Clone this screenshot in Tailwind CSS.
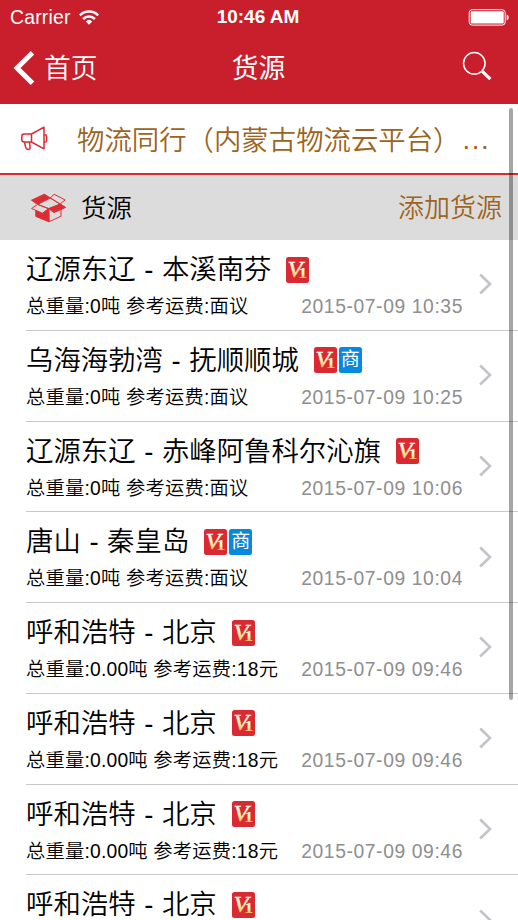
<!DOCTYPE html>
<html lang="zh-CN">
<head>
<meta charset="utf-8">
<title>货源</title>
<script src="https://cdn.jsdelivr.net/npm/@tailwindcss/browser@4"></script>
</head>
<body class="bg-white">
<div class="relative w-[518px] h-[920px] overflow-hidden bg-white text-black font-['Liberation_Sans','Noto_Sans_CJK_SC',sans-serif] font-[350] whitespace-nowrap">
  <header class="h-[104px] bg-[#c91e2b] text-white">
    <div class="h-[34px] grid grid-cols-3 items-center pl-[10px] pr-[9px]">
      <div class="flex items-center gap-[8px] text-[19.4px] leading-[34px] tracking-[0.2px]">
        <span>Carrier</span>
        <svg class="w-5 h-[15px]" viewBox="0 0 20 15" fill="none" stroke="currentColor" stroke-width="2.5"><path d="M.8 5.4a13 13 0 0 1 18.4 0M4.1 9a8.4 8.4 0 0 1 11.8 0"/><path d="M6.7 11.4a4.8 4.8 0 0 1 6.6 0L10 14.8z" fill="currentColor" stroke="none"/></svg>
      </div>
      <span class="text-center text-[19px] font-bold pr-[3px]">10:46 AM</span>
      <svg class="justify-self-end w-[41px] h-[17px]" viewBox="0 0 41 17"><rect x="1.2" y=".7" width="36" height="15.4" rx="3" fill="none" stroke="#fff" stroke-width="1"/><rect x="2.7" y="2.2" width="33" height="12.4" rx="1.2" fill="#fff"/><path d="M38.7 5.6c2.6.7 2.6 5 0 5.7z" fill="#fff"/></svg>
    </div>
    <div class="h-[70px] grid grid-cols-[1fr_auto_1fr] items-start pl-[13px] pr-[26px] text-[26.8px] leading-[70px]">
      <div class="flex items-center gap-[9px]">
        <svg class="w-[22px] h-[36px] -mt-[2px]" viewBox="0 0 22 36" fill="none" stroke="#fff" stroke-width="5"><path d="M19.5 2.7 4 18l15.5 15.3"/></svg>
        <span>首页</span>
      </div>
      <h1 class="font-normal pl-[12px]">货源</h1>
      <svg class="justify-self-end mt-[17px] w-[30px] h-[30px]" viewBox="0 0 30 30" fill="none" stroke="#fff"><circle cx="12.3" cy="12.3" r="10.8" stroke-width="1.5"/><path d="m19.8 19.8 8.6 8.4" stroke-width="3.2"/></svg>
    </div>
  </header>

  <div class="h-[71px] flex items-center border-b-2 border-[#d92b36] pl-[20px] text-[27.4px] text-[#9c6420]">
    <svg class="w-[28px] h-[25px] mr-[29px] mb-px shrink-0" viewBox="0 0 28 25" fill="none" stroke="#d92b36" stroke-width="1.5" stroke-linejoin="round"><path d="M11.5 8H4.2q-2.4 0-2.4 2.4v3.2q0 2.4 2.4 2.4h7.3zM11.5 8 24 1.2v21.6L11.5 16M24.2 8.8h.8q1.6 0 1.6 1.6v4.1q0 1.6-1.6 1.6h-.8M4.4 16l1.3 5.4q.5 2 2.4 2 2.4-.1 2-2.6L9.4 16"/></svg>
    <span class="pt-[4px]">物流同行（内蒙古物流云平台）</span><span class="pt-[2px] pl-[2px] tracking-[1.6px]">...</span>
  </div>

  <div class="h-[65px] flex items-center bg-[#dcdcdc] pl-[30px] pr-[16px]">
    <svg class="w-[37px] h-[30px] mr-[14px]" viewBox="0 0 37 30" stroke="#dc2d34" stroke-width="1" stroke-linejoin="round"><path fill="#dcdcdc" d="M18.5 15.6 31 11.5V23.2l-12 5.6z"/><path fill="#dc2d34" d="M1.5 7.2 14.4 1.2 20.4 5 7.6 11.4zM5.8 16V23.4l13.2 5.4V15.6zM18.6 15.6 30 10.8l5.6 3.6L24 19.6z"/><path fill="#dcdcdc" d="M20.4 5 24 1.2 35.2 7 30 11zM7.6 11.4 20.4 5l9.6 6-11.6 4.6zM1.6 15.5l6-4.1 11 4.2-6.2 4.6z"/></svg>
    <span class="text-[25.4px] pt-px">货源</span>
    <span class="ml-auto text-[26px] pt-px text-[#9c6420]">添加货源</span>
  </div>

  <main id="list"></main>

  <div class="absolute top-[108px] left-[509px] w-[4px] h-[592px] rounded-full bg-black/35"></div>
</div>

<template id="v1"><svg class="w-[23px] h-[26px] shrink-0 -mt-px" viewBox="0 0 23 26"><defs><linearGradient id="gold" x2="0" y2="1"><stop offset=".2" stop-color="#fffbe9"/><stop offset=".55" stop-color="#fff1b5"/><stop offset=".85" stop-color="#f3b64c"/></linearGradient></defs><rect width="23" height="26" rx="2.5" fill="#d92a34"/><text x="1.6" y="20" font-family="Liberation Serif, serif" font-size="22.5" font-style="italic" fill="url(#gold)" stroke="url(#gold)" stroke-width=".5" textLength="15" lengthAdjust="spacingAndGlyphs">V</text><text x="12" y="21" font-family="Liberation Serif, serif" font-size="15" font-weight="700" fill="url(#gold)" textLength="9.5" lengthAdjust="spacingAndGlyphs">1</text></svg></template>
<template id="shang"><span class="w-[23px] h-[26px] shrink-0 -mt-px rounded-[2.5px] bg-[#078ade] text-white text-[19px] leading-[26px] font-normal text-center">商</span></template>
<script>
const rows = [
  ['辽源东辽 - 本溪南芬', '0', '面议', '10:35', 0],
  ['乌海海勃湾 - 抚顺顺城', '0', '面议', '10:25', 1],
  ['辽源东辽 - 赤峰阿鲁科尔沁旗', '0', '面议', '10:06', 0],
  ['唐山 - 秦皇岛', '0', '面议', '10:04', 1],
  ['呼和浩特 - 北京', '0.00', '18元', '09:46', 0],
  ['呼和浩特 - 北京', '0.00', '18元', '09:46', 0],
  ['呼和浩特 - 北京', '0.00', '18元', '09:46', 0],
  ['呼和浩特 - 北京', '0.00', '18元', '09:46', 0]
];
const v1 = document.getElementById('v1').innerHTML;
const shang = document.getElementById('shang').innerHTML;
document.getElementById('list').innerHTML = rows.map(([route, weight, fee, time, merchant]) => `
  <article class="h-[90.75px] ml-[26px] flex items-center border-b border-[#c9c9cb]">
    <div class="w-[437px] h-full pt-[10px]">
      <div class="h-[40px] flex items-center gap-[2px]">
        <h2 class="mr-[13px] text-[27.4px] leading-[40px] [word-spacing:1px]">${route}</h2>${v1}${merchant ? shang : ''}
      </div>
      <div class="h-[33px] flex items-center justify-between text-[19.3px] leading-[33px]">
        <span class="tracking-[0.2px]">总重量:${weight}吨 参考运费:${fee}</span>
        <time class="text-[#8e8e90] tracking-[0.6px]">2015-07-09 ${time}</time>
      </div>
    </div>
    <svg class="ml-[16px] -mt-px w-[13px] h-[22px]" viewBox="0 0 13 22" fill="none" stroke="#c3c3c8" stroke-width="2.6"><path d="m1.2 1.5 9.8 9.5-9.8 9.5"/></svg>
  </article>`).join('');
</script>
</body>
</html>
